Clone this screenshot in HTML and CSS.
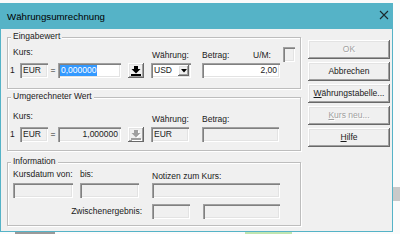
FILE: index.html
```html
<!DOCTYPE html>
<html>
<head>
<meta charset="utf-8">
<link rel="stylesheet" href="styles.css">
</head>
<body>
<div class="screen">
  <div class="bg-top"></div>
  <div class="middle">
    <div class="dialog">
      <div class="titlebar">
        <span class="title">Währungsumrechnung</span>
        <svg class="close" width="10" height="10" viewBox="0 0 10 10"><path d="M1 1L9 9M9 1L1 9" stroke="#1b2a2e" stroke-width="1.1" fill="none"/></svg>
      </div>
      <div class="body">
        <div class="groups">
          <div class="group g1">
            <span class="legend">Eingabewert</span>
            <div class="row r1">
              <span class="lbl kurs">Kurs:</span>
              <span class="lbl w-cur">Währung:</span>
              <span class="lbl w-amt">Betrag:</span>
              <span class="lbl w-um">U/M:</span>
              <span class="check sunk"></span>
            </div>
            <div class="row r2">
              <span class="one">1</span>
              <span class="sunk cur3">EUR</span>
              <span class="eq">=</span>
              <span class="sunk rate white"><span class="sel">0,000000</span></span>
              <span class="iconbtn raised">
                <svg width="16" height="15" viewBox="0 0 16 15"><rect x="6" y="3" width="4" height="3" fill="#000"/><polygon points="3.5,6 12.5,6 8,10.5" fill="#000"/><rect x="3" y="11" width="10" height="2" fill="#000"/></svg>
              </span>
              <span class="sunk combo white"><span class="combo-text">USD</span><span class="drop raised"><svg width="6" height="4" viewBox="0 0 6 4"><polygon points="0,0 6,0 3,3.5" fill="#000"/></svg></span></span>
              <span class="sunk amount white">2,00</span>
            </div>
          </div>

          <div class="group g2">
            <span class="legend">Umgerechneter Wert</span>
            <div class="row r1">
              <span class="lbl kurs">Kurs:</span>
              <span class="lbl w-cur">Währung:</span>
              <span class="lbl w-amt">Betrag:</span>
            </div>
            <div class="row r2">
              <span class="one">1</span>
              <span class="sunk cur3">EUR</span>
              <span class="eq">=</span>
              <span class="sunk rate right">1,000000</span>
              <span class="iconbtn raised">
                <svg width="16" height="15" viewBox="0 0 16 15"><g fill="#fff" transform="translate(1,1)"><rect x="6" y="3" width="4" height="3"/><polygon points="3.5,6 12.5,6 8,10.5"/><rect x="3" y="11" width="10" height="2"/></g><g fill="#a0a0a0"><rect x="6" y="3" width="4" height="3"/><polygon points="3.5,6 12.5,6 8,10.5"/><rect x="3" y="11" width="10" height="2"/></g></svg>
              </span>
              <span class="sunk cur-ro">EUR</span>
              <span class="sunk amount2"></span>
            </div>
          </div>

          <div class="group g3">
            <span class="legend">Information</span>
            <div class="info">
              <span class="lbl i-von">Kursdatum von:</span>
              <span class="lbl i-bis">bis:</span>
              <span class="lbl i-notes">Notizen zum Kurs:</span>
              <span class="sunk i-box1"></span>
              <span class="sunk i-box2"></span>
              <span class="sunk i-box3"></span>
              <span class="lbl i-zw">Zwischenergebnis:</span>
              <span class="sunk i-box4"></span>
              <span class="sunk i-box5"></span>
            </div>
          </div>
        </div>

        <div class="btns">
          <div class="btn raised disabled">OK</div>
          <div class="btn raised">Abbrechen</div>
          <div class="btn raised"><span><u>W</u>ährungstabelle...</span></div>
          <div class="btn raised disabled"><span><u>K</u>urs neu...</span></div>
          <div class="btn raised"><span><u>H</u>ilfe</span></div>
        </div>
      </div>
    </div>
    <div class="bg-right">
      <div class="bg-right-block"></div>
    </div>
  </div>
  <div class="bg-bottom">
    <div class="bb-dark"></div>
    <div class="bb-green"></div>
  </div>
</div>
</body>
</html>
```

FILE: styles.css
```css
* {
  box-sizing: border-box;
  margin: 0;
  padding: 0;
}

html, body {
  width: 400px;
  height: 234px;
  overflow: hidden;
}

body {
  font-family: "Liberation Sans", Arial, sans-serif;
  font-size: 8.5px;
  color: #1a1a1a;
  background: #fff;
}

.screen {
  display: flex;
  flex-direction: column;
  width: 400px;
  height: 234px;
}

.bg-top {
  height: 3px;
  background: #fafafa;
}

.middle {
  display: flex;
  height: 229px;
}

.dialog {
  width: 393px;
  height: 229px;
  display: flex;
  flex-direction: column;
  border: 1px solid #55b3c7;
  border-top: 0;
  background: #f0f0f0;
}

.titlebar {
  height: 26px;
  flex: none;
  background: #55b3c7;
  display: flex;
  align-items: center;
  justify-content: space-between;
  padding: 0 3px 0 6px;
}

.title {
  font-size: 9.7px;
  color: #000;
  line-height: 12px;
  margin-top: 1px;
}

.close {
  display: block;
  margin-top: -2px;
}

.body {
  flex: 1;
  display: flex;
}

.groups {
  display: flex;
  flex-direction: column;
  margin-left: 6px;
  width: 294px;
}

.group {
  position: relative;
  border: 1px solid #bdbdbd;
  box-shadow: inset 1px 1px 0 #fff, 1px 1px 0 #fff;
}

.g1 {
  margin-top: 8px;
  height: 52px;
  padding-top: 9px;
}

.g2 {
  margin-top: 8px;
  height: 54px;
  padding-top: 13px;
}

.g3 {
  margin-top: 11px;
  height: 64px;
  padding-top: 5px;
  padding-left: 5px;
}

.legend {
  position: absolute;
  top: -7px;
  left: 3px;
  padding: 0 2px;
  background: #f0f0f0;
  line-height: 11px;
  white-space: nowrap;
}

.row {
  display: flex;
  height: 15px;
}

.r1 {
  padding-left: 5px;
  margin-bottom: 1px;
}

.r2 {
  padding-left: 2px;
  align-items: stretch;
}

.lbl {
  line-height: 11px;
  white-space: nowrap;
}

.kurs {
  width: 139px;
  align-self: flex-start;
}

.w-cur {
  width: 50px;
  align-self: center;
  margin-top: 2px;
}

.w-amt {
  width: 51px;
  align-self: center;
  margin-top: 2px;
}

.w-um {
  width: 30px;
  align-self: center;
  margin-top: 2px;
}

.check {
  width: 12px;
  height: 15px;
}

.sunk {
  display: block;
  background: #f0f0f0;
  box-shadow: inset 1px 1px 0 #a0a0a0, inset 2px 2px 0 #808080, inset -1px -1px 0 #fff, inset -2px -2px 0 #e3e3e3;
  line-height: 15px;
  white-space: nowrap;
  overflow: hidden;
}

.white {
  background: #fff;
}

.one {
  width: 10px;
  line-height: 15px;
}

.cur3 {
  width: 28px;
  padding-left: 3px;
}

.eq {
  width: 10px;
  text-align: center;
  line-height: 15px;
}

.rate {
  width: 63px;
  padding-left: 2px;
}

.right {
  text-align: right;
  padding-right: 3px;
}

.sel {
  display: inline-block;
  background: #3399ff;
  color: #fff;
  line-height: 11px;
  padding: 0 1px;
  vertical-align: top;
  margin-top: 2px;
}

.iconbtn {
  display: block;
  width: 16px;
  margin-left: 7px;
}

.iconbtn svg {
  display: block;
}

.raised {
  background: #f0f0f0;
  box-shadow: inset -1px -1px 0 #696969, inset 1px 1px 0 #fff, inset -2px -2px 0 #a0a0a0, inset 2px 2px 0 #e3e3e3;
}

.combo {
  width: 40px;
  margin-left: 7px;
  display: flex;
  align-items: center;
  padding: 0 2px 0 3px;
}

.combo-text {
  flex: 1;
}

.drop {
  width: 11px;
  height: 11px;
  display: flex;
  align-items: center;
  justify-content: center;
}

.drop svg {
  display: block;
  margin-top: 1px;
}

.amount {
  width: 78px;
  margin-left: 11px;
  text-align: right;
  padding-right: 3px;
}

.cur-ro {
  width: 38px;
  margin-left: 7px;
  padding-left: 3px;
}

.amount2 {
  width: 77px;
  margin-left: 13px;
}

.info {
  display: grid;
  grid-template-columns: 60px 7px 59px 13px 38px 13px 77px;
  grid-template-rows: 15px 15px 6px 15px;
}

.i-von {
  grid-column: 1 / 3;
  grid-row: 1;
  align-self: start;
  margin-top: 1px;
}

.i-bis {
  grid-column: 3;
  grid-row: 1;
  align-self: start;
  margin-top: 1px;
}

.i-notes {
  grid-column: 5 / 8;
  grid-row: 1;
  align-self: start;
  margin-top: 3px;
}

.i-box1 {
  grid-column: 1;
  grid-row: 2;
}

.i-box2 {
  grid-column: 3;
  grid-row: 2;
}

.i-box3 {
  grid-column: 5 / 8;
  grid-row: 2;
}

.i-zw {
  grid-column: 1 / 4;
  grid-row: 4;
  justify-self: end;
  align-self: center;
  margin-right: -3px;
}

.i-box4 {
  grid-column: 5;
  grid-row: 4;
}

.i-box5 {
  grid-column: 7;
  grid-row: 4;
}

.btns {
  display: flex;
  flex-direction: column;
  gap: 3px;
  margin-left: 7px;
  width: 82px;
  padding-top: 11px;
}

.btn {
  height: 19px;
  display: flex;
  align-items: center;
  justify-content: center;
  line-height: 11px;
  white-space: nowrap;
}

.disabled {
  color: #a0a0a0;
  text-shadow: 1px 1px 0 #fff;
}

.bg-right {
  flex: 1;
  background: #fbfbfb;
  padding-top: 184px;
}

.bg-right-block {
  height: 14px;
  background: #c9c9c9;
}

.bg-bottom {
  height: 2px;
  display: flex;
  background: #fbfbfb;
}

.bb-dark {
  width: 40px;
  margin-left: 15px;
  background: #9a9a9a;
}

.bb-green {
  width: 47px;
  margin-left: 190px;
  background: #bfe5b0;
}
```
